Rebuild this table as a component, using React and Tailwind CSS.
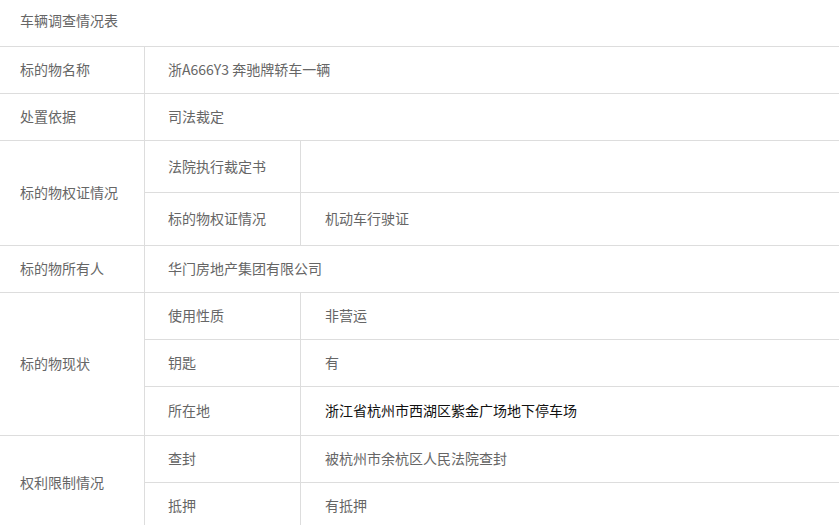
import React from 'react';

// 车辆调查情况表 — grouped rows, left label spans sub-rows
const groups = [
    { label: '标的物名称', value: '浙A666Y3 奔驰牌轿车一辆', h: 'h-[47px]' },
    { label: '处置依据', value: '司法裁定', h: 'h-[47px]' },
    {
        label: '标的物权证情况',
        rows: [
            { k: '法院执行裁定书', v: '', h: 'h-[52px]' },
            { k: '标的物权证情况', v: '机动车行驶证', h: 'h-[53px]' },
        ],
    },
    { label: '标的物所有人', value: '华门房地产集团有限公司', h: 'h-[47px]' },
    {
        label: '标的物现状',
        rows: [
            { k: '使用性质', v: '非营运', h: 'h-[47px]' },
            { k: '钥匙', v: '有', h: 'h-[47px]' },
            { k: '所在地', v: '浙江省杭州市西湖区紫金广场地下停车场', h: 'h-[49px]', dark: true },
        ],
    },
    {
        label: '权利限制情况',
        rows: [
            { k: '查封', v: '被杭州市余杭区人民法院查封', h: 'h-[47px]' },
            { k: '抵押', v: '有抵押', h: 'h-[47px]' },
        ],
    },
];

export default function App() {
    return (
        <div
            className="w-[839px] bg-white text-[14px] text-[#666] leading-none"
            style={{ fontFamily: '"Microsoft YaHei", "Noto Sans CJK SC", sans-serif' }}
        >
            {/* title row */}
            <div className="h-[47px] flex items-center pl-5 pb-[6px] border-b border-[#ddd]">
                车辆调查情况表
            </div>

            {groups.map((g, i) => (
                <div key={i} className="flex">
                    <div className="w-[145px] shrink-0 flex items-center pl-5 pb-[2px] border-r border-b border-[#ddd]">
                        {g.label}
                    </div>
                    {g.rows ? (
                        <div className="flex-1 flex flex-col">
                            {g.rows.map((r, j) => (
                                <div key={j} className={`flex ${r.h} border-b border-[#ddd]`}>
                                    <div className="w-[156px] shrink-0 flex items-center pl-[23px] pb-[2px] border-r border-[#ddd]">
                                        {r.k}
                                    </div>
                                    <div className={`flex-1 flex items-center pl-6 pb-[2px] ${r.dark ? 'text-[#111]' : ''}`}>
                                        {r.v}
                                    </div>
                                </div>
                            ))}
                        </div>
                    ) : (
                        <div className={`flex-1 flex items-center pl-[23px] pb-[2px] ${g.h} border-b border-[#ddd]`}>
                            {g.value}
                        </div>
                    )}
                </div>
            ))}
        </div>
    );
}
